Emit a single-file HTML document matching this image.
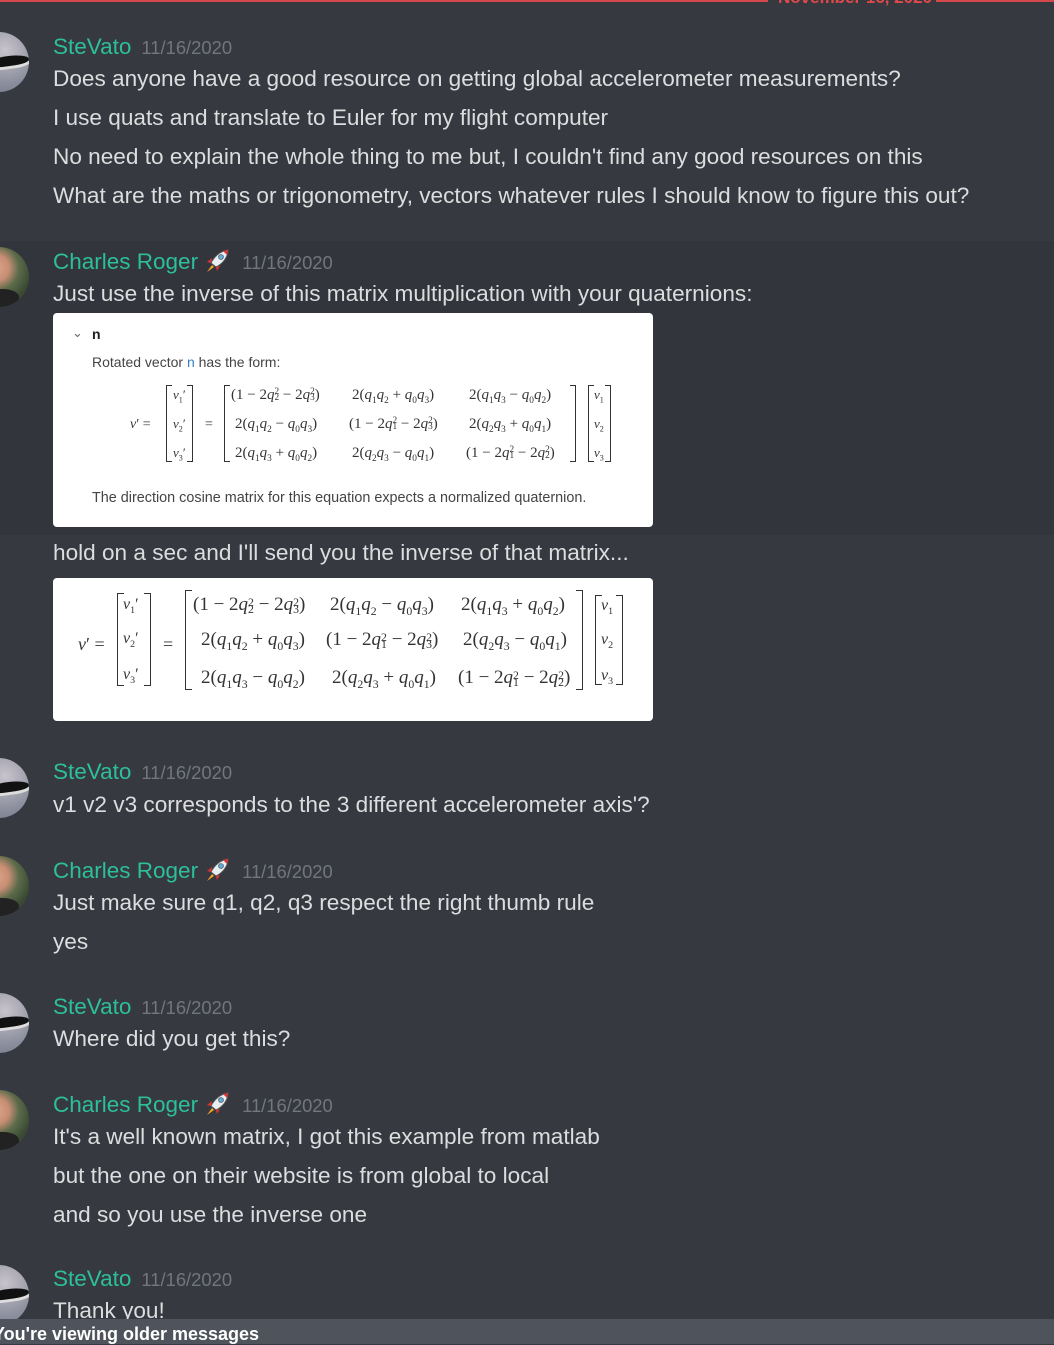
<!DOCTYPE html>
<html><head><meta charset="utf-8"><style>
*{margin:0;padding:0;box-sizing:border-box}
body{width:1054px;height:1344px;background:#36393f;position:relative;overflow:hidden;font-family:"Liberation Sans",sans-serif;color:#dcddde}
.hl{position:absolute;left:0;top:241px;width:1054px;height:294px;background:#32353b}
.t{position:absolute;left:53px;font-size:22.6px;white-space:nowrap;line-height:26px}
.n{color:#2dbf9c;font-size:22.5px}
.ts{color:#72767d;font-size:18.4px;margin-left:10px}
.av{position:absolute;left:-31px;width:60px;height:60px;border-radius:50%;overflow:hidden}
.av1{background:radial-gradient(circle at 60% 30%,#c9c4cc,#8c8f9e 60%,#6d7282)}
.av1:after{content:"";position:absolute;left:20px;top:24px;width:40px;height:10px;background:#111;border-radius:50% 60% 40% 40%;transform:rotate(-8deg);box-shadow:0 3px 0 #ddd}
.av2{background:radial-gradient(circle at 45% 35%,#d9a58a 0,#c98e74 25%,#5b6b4a 45%,#3a4a32 70%)}
.av2:after{content:"";position:absolute;left:10px;top:42px;width:40px;height:20px;background:#222;border-radius:40% 40% 0 0}
.emb{position:absolute;left:53px;width:600px;background:#fff;border-radius:4px;color:#222}
.s{position:absolute;font-family:"Liberation Sans",sans-serif;font-size:14px;color:#444;white-space:nowrap}
.m{position:absolute;font-family:"Liberation Serif",serif;white-space:nowrap;color:#333}
.m i{font-style:italic}
.br{position:absolute;border:1px solid #333}
.bl{border-right:none}.brr{border-left:none}
sub,sup{font-size:0.62em}
.ss{display:inline-block;vertical-align:middle;line-height:0.6em;font-size:0.62em;text-align:left}
.bar{position:absolute;left:0;top:1319px;width:1054px;height:25px;background:#4f545c}
.rk{vertical-align:-5px;margin-left:6px}
</style></head><body>
<div style="position:absolute;left:0;top:0;width:768px;height:2px;background:#d4474a"></div>
<div style="position:absolute;left:936px;top:0;width:118px;height:2px;background:#d4474a"></div>
<div style="position:absolute;left:778px;top:-12px;color:#e0494c;font-weight:bold;font-size:17px">November 16, 2020</div>

<div class="hl"></div>

<div class="av av1" style="top:32px"></div>
<div class="t" style="top:34px"><span class="n">SteVato</span><span class="ts">11/16/2020</span></div>
<div class="t" style="top:66px">Does anyone have a good resource on getting global accelerometer measurements?</div>
<div class="t" style="top:105px">I use quats and translate to Euler for my flight computer</div>
<div class="t" style="top:144px">No need to explain the whole thing to me but, I couldn't find any good resources on this</div>
<div class="t" style="top:183px">What are the maths or trigonometry, vectors whatever rules I should know to figure this out?</div>

<div class="av av2" style="top:247px"></div>
<div class="t" style="top:248px"><span class="n">Charles Roger</span><svg class="rk" width="28" height="26" viewBox="0 0 28 26"><path d="M24 2 C16 3 10 9 7 15 L12 19 C18 16 24 10 24 2Z" fill="#e8eef2" stroke="#555" stroke-width="1"/><path d="M24 2 L19 3 L23 7Z" fill="#d33"/><circle cx="17" cy="9" r="2.4" fill="#5ab0e0" stroke="#555" stroke-width=".8"/><path d="M7 15 L3 14 L8 10Z M12 19 L13 23 L16 18Z" fill="#d33"/><path d="M8 17 L3 24 L10 19Z" fill="#f5a623"/></svg><span class="ts">11/16/2020</span></div>
<div class="t" style="top:281px">Just use the inverse of this matrix multiplication with your quaternions:</div>

<div class="emb" style="top:313px;height:214px">
<div class="s" style="left:19px;top:12px;color:#666;font-size:13px">&#8964;</div>
<div class="s" style="left:39px;top:13px;font-weight:bold;color:#222">n</div>
<div class="s" style="left:39px;top:41px">Rotated vector <span style="color:#3a7fc2">n</span> has the form:</div>
<div class="m" style="left:77px;top:104px;font-size:14px"><i>v</i>′ =</div>
<div class="br bl" style="left:113px;top:72px;width:6px;height:77px"></div>
<div class="br brr" style="left:134px;top:72px;width:6px;height:77px"></div>
<div class="m" style="left:120px;top:74px;font-size:13px"><i>v</i><sub>1</sub>′</div>
<div class="m" style="left:120px;top:103px;font-size:13px"><i>v</i><sub>2</sub>′</div>
<div class="m" style="left:120px;top:132px;font-size:13px"><i>v</i><sub>3</sub>′</div>
<div class="m" style="left:152px;top:104px;font-size:14px">=</div>
<div class="br bl" style="left:171px;top:72px;width:6px;height:77px"></div>
<div class="br brr" style="left:517px;top:72px;width:6px;height:77px"></div>
<div class="m" style="left:178px;top:74px;font-size:15px">(1 − 2<i>q</i><span class="ss">2<br>2</span> − 2<i>q</i><span class="ss">2<br>3</span>)</div>
<div class="m" style="left:299px;top:74px;font-size:15px">2(<i>q</i><sub>1</sub><i>q</i><sub>2</sub> + <i>q</i><sub>0</sub><i>q</i><sub>3</sub>)</div>
<div class="m" style="left:416px;top:74px;font-size:15px">2(<i>q</i><sub>1</sub><i>q</i><sub>3</sub> − <i>q</i><sub>0</sub><i>q</i><sub>2</sub>)</div>
<div class="m" style="left:182px;top:103px;font-size:15px">2(<i>q</i><sub>1</sub><i>q</i><sub>2</sub> − <i>q</i><sub>0</sub><i>q</i><sub>3</sub>)</div>
<div class="m" style="left:296px;top:103px;font-size:15px">(1 − 2<i>q</i><span class="ss">2<br>1</span> − 2<i>q</i><span class="ss">2<br>3</span>)</div>
<div class="m" style="left:416px;top:103px;font-size:15px">2(<i>q</i><sub>2</sub><i>q</i><sub>3</sub> + <i>q</i><sub>0</sub><i>q</i><sub>1</sub>)</div>
<div class="m" style="left:182px;top:132px;font-size:15px">2(<i>q</i><sub>1</sub><i>q</i><sub>3</sub> + <i>q</i><sub>0</sub><i>q</i><sub>2</sub>)</div>
<div class="m" style="left:299px;top:132px;font-size:15px">2(<i>q</i><sub>2</sub><i>q</i><sub>3</sub> − <i>q</i><sub>0</sub><i>q</i><sub>1</sub>)</div>
<div class="m" style="left:413px;top:132px;font-size:15px">(1 − 2<i>q</i><span class="ss">2<br>1</span> − 2<i>q</i><span class="ss">2<br>2</span>)</div>
<div class="br bl" style="left:535px;top:72px;width:6px;height:77px"></div>
<div class="br brr" style="left:552px;top:72px;width:6px;height:77px"></div>
<div class="m" style="left:541px;top:74px;font-size:13px"><i>v</i><sub>1</sub></div>
<div class="m" style="left:541px;top:103px;font-size:13px"><i>v</i><sub>2</sub></div>
<div class="m" style="left:541px;top:132px;font-size:13px"><i>v</i><sub>3</sub></div>
<div class="s" style="left:39px;top:177px;font-size:14.4px">The direction cosine matrix for this equation expects a normalized quaternion.</div>
</div>

<div class="t" style="top:540px">hold on a sec and I'll send you the inverse of that matrix...</div>

<div class="emb" style="top:578px;height:143px">
<div class="m" style="left:25px;top:56px;font-size:18px"><i>v</i>′ =</div>
<div class="br bl" style="left:64px;top:15px;width:7px;height:93px"></div>
<div class="br brr" style="left:91px;top:15px;width:7px;height:93px"></div>
<div class="m" style="left:70px;top:18px;font-size:16px"><i>v</i><sub>1</sub>′</div>
<div class="m" style="left:70px;top:52px;font-size:16px"><i>v</i><sub>2</sub>′</div>
<div class="m" style="left:70px;top:88px;font-size:16px"><i>v</i><sub>3</sub>′</div>
<div class="m" style="left:110px;top:56px;font-size:18px">=</div>
<div class="br bl" style="left:132px;top:12px;width:7px;height:100px"></div>
<div class="br brr" style="left:523px;top:12px;width:7px;height:100px"></div>
<div class="m" style="left:140px;top:16px;font-size:19px">(1 − 2<i>q</i><span class="ss">2<br>2</span> − 2<i>q</i><span class="ss">2<br>3</span>)</div>
<div class="m" style="left:277px;top:16px;font-size:19px">2(<i>q</i><sub>1</sub><i>q</i><sub>2</sub> − <i>q</i><sub>0</sub><i>q</i><sub>3</sub>)</div>
<div class="m" style="left:408px;top:16px;font-size:19px">2(<i>q</i><sub>1</sub><i>q</i><sub>3</sub> + <i>q</i><sub>0</sub><i>q</i><sub>2</sub>)</div>
<div class="m" style="left:148px;top:51px;font-size:19px">2(<i>q</i><sub>1</sub><i>q</i><sub>2</sub> + <i>q</i><sub>0</sub><i>q</i><sub>3</sub>)</div>
<div class="m" style="left:273px;top:51px;font-size:19px">(1 − 2<i>q</i><span class="ss">2<br>1</span> − 2<i>q</i><span class="ss">2<br>3</span>)</div>
<div class="m" style="left:410px;top:51px;font-size:19px">2(<i>q</i><sub>2</sub><i>q</i><sub>3</sub> − <i>q</i><sub>0</sub><i>q</i><sub>1</sub>)</div>
<div class="m" style="left:148px;top:89px;font-size:19px">2(<i>q</i><sub>1</sub><i>q</i><sub>3</sub> − <i>q</i><sub>0</sub><i>q</i><sub>2</sub>)</div>
<div class="m" style="left:279px;top:89px;font-size:19px">2(<i>q</i><sub>2</sub><i>q</i><sub>3</sub> + <i>q</i><sub>0</sub><i>q</i><sub>1</sub>)</div>
<div class="m" style="left:405px;top:89px;font-size:19px">(1 − 2<i>q</i><span class="ss">2<br>1</span> − 2<i>q</i><span class="ss">2<br>2</span>)</div>
<div class="br bl" style="left:542px;top:17px;width:7px;height:90px"></div>
<div class="br brr" style="left:563px;top:17px;width:7px;height:90px"></div>
<div class="m" style="left:548px;top:19px;font-size:16px"><i>v</i><sub>1</sub></div>
<div class="m" style="left:548px;top:53px;font-size:16px"><i>v</i><sub>2</sub></div>
<div class="m" style="left:548px;top:89px;font-size:16px"><i>v</i><sub>3</sub></div>
</div>

<div class="av av1" style="top:758px"></div>
<div class="t" style="top:759px"><span class="n">SteVato</span><span class="ts">11/16/2020</span></div>
<div class="t" style="top:792px">v1 v2 v3 corresponds to the 3 different accelerometer axis'?</div>

<div class="av av2" style="top:856px"></div>
<div class="t" style="top:857px"><span class="n">Charles Roger</span><svg class="rk" width="28" height="26" viewBox="0 0 28 26"><path d="M24 2 C16 3 10 9 7 15 L12 19 C18 16 24 10 24 2Z" fill="#e8eef2" stroke="#555" stroke-width="1"/><path d="M24 2 L19 3 L23 7Z" fill="#d33"/><circle cx="17" cy="9" r="2.4" fill="#5ab0e0" stroke="#555" stroke-width=".8"/><path d="M7 15 L3 14 L8 10Z M12 19 L13 23 L16 18Z" fill="#d33"/><path d="M8 17 L3 24 L10 19Z" fill="#f5a623"/></svg><span class="ts">11/16/2020</span></div>
<div class="t" style="top:890px">Just make sure q1, q2, q3 respect the right thumb rule</div>
<div class="t" style="top:929px">yes</div>

<div class="av av1" style="top:993px"></div>
<div class="t" style="top:994px"><span class="n">SteVato</span><span class="ts">11/16/2020</span></div>
<div class="t" style="top:1026px">Where did you get this?</div>

<div class="av av2" style="top:1090px"></div>
<div class="t" style="top:1091px"><span class="n">Charles Roger</span><svg class="rk" width="28" height="26" viewBox="0 0 28 26"><path d="M24 2 C16 3 10 9 7 15 L12 19 C18 16 24 10 24 2Z" fill="#e8eef2" stroke="#555" stroke-width="1"/><path d="M24 2 L19 3 L23 7Z" fill="#d33"/><circle cx="17" cy="9" r="2.4" fill="#5ab0e0" stroke="#555" stroke-width=".8"/><path d="M7 15 L3 14 L8 10Z M12 19 L13 23 L16 18Z" fill="#d33"/><path d="M8 17 L3 24 L10 19Z" fill="#f5a623"/></svg><span class="ts">11/16/2020</span></div>
<div class="t" style="top:1124px">It's a well known matrix, I got this example from matlab</div>
<div class="t" style="top:1163px">but the one on their website is from global to local</div>
<div class="t" style="top:1202px">and so you use the inverse one</div>

<div class="av av1" style="top:1265px"></div>
<div class="t" style="top:1266px"><span class="n">SteVato</span><span class="ts">11/16/2020</span></div>
<div class="t" style="top:1298px">Thank you!</div>

<div class="bar"></div>
<div style="position:absolute;left:-7px;top:1324px;font-size:18px;font-weight:bold;color:#fff;white-space:nowrap">You're viewing older messages</div>
</body></html>
